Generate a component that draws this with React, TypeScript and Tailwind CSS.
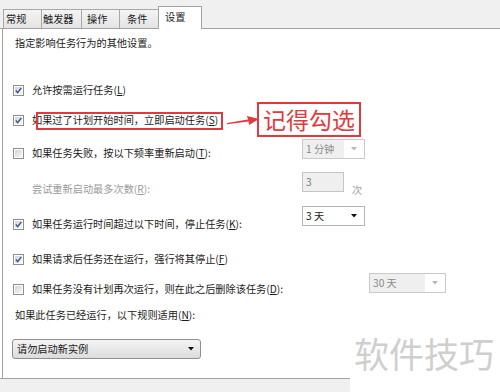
import React from 'react';

function CheckBox({ checked }: { checked?: boolean }) {
  return (
    <span className="flex h-[11px] w-[11px] shrink-0 border border-[#8e8f8f] bg-white p-px">
      <span className="flex h-full w-full items-center justify-center bg-linear-to-br from-[#cfd3d9] to-[#f7f7f7]">
        {checked && (
          <svg width="7" height="7" viewBox="0 0 7 7">
            <path d="M0.8 3.4 L2.7 5.6 L6.3 0.9" stroke="#40568c" strokeWidth="1.5" fill="none" />
          </svg>
        )}
      </span>
    </span>
  );
}

function Arrow({ color }: { color: string }) {
  return (
    <svg width="6" height="4" viewBox="0 0 6 4">
      <path d="M0 0 H6 L3 3.5 Z" fill={color} />
    </svg>
  );
}

function Select({ text, width, disabled }: { text: string; width: string; disabled?: boolean }) {
  return (
    <div className={`flex h-[20px] shrink-0 border ${width} ${disabled ? 'border-[#cacaca]' : 'border-[#b5b5b5]'} bg-white`}>
      <div
        className={`flex-1 pl-[3px] leading-[18px] ${disabled ? 'bg-[#efefef] text-[#8a8a8a]' : 'text-[#1a1a1a]'}`}
      >
        {text}
      </div>
      <div className="flex w-[20px] items-center justify-center">
        <Arrow color={disabled ? '#b8b8b8' : '#111111'} />
      </div>
    </div>
  );
}

function Label({ children, mt }: { children: React.ReactNode; mt?: string }) {
  return <span className={`h-[14px] leading-[14px] whitespace-nowrap ${mt ?? ''}`}>{children}</span>;
}

function Row({ checked, children, mt }: { checked?: boolean; children: React.ReactNode; mt?: string }) {
  return (
    <div className={`flex items-center gap-[8px] ${mt ?? ''}`}>
      <CheckBox checked={checked} />
      <Label>{children}</Label>
    </div>
  );
}

const tabs = [
  { name: '常规', w: 'w-[39px]', pl: 'pl-[2px]' },
  { name: '触发器', w: 'w-[41px]', pl: 'pl-[1px]' },
  { name: '操作', w: 'w-[39px]', pl: 'pl-[5px]' },
  { name: '条件', w: 'w-[40px]', pl: 'pl-[7px]' },
];

export default function App() {
  return (
    <div className="relative h-[392px] w-[500px] overflow-hidden bg-white text-[10.2px] text-[#1a1a1a] font-['Noto_Sans_CJK_SC','Liberation_Sans',sans-serif]">
      {/* tab strip */}
      <div className="flex h-[29px] items-end border-b border-[#a3a3a3] bg-[#f0f0f0] pl-[3px]">
        {tabs.map((t, i) => (
          <div
            key={t.name}
            className={`h-[19px] border border-b-0 border-[#a8a8a8] bg-linear-to-b from-[#f4f4f4] to-[#e4e4e4] pt-[2px] leading-[14px] ${t.w} ${t.pl} ${i > 0 ? '-ml-px' : ''}`}
          >
            {t.name}
          </div>
        ))}
        <div className="relative z-10 -mb-px -ml-px h-[23px] w-[44px] border border-b-0 border-[#a3a3a3] bg-white pl-[6px] pt-[3px] leading-[14px]">
          设置
        </div>
      </div>

      {/* panel */}
      <div className="ml-[2px] h-[349px] border-l border-[#a3a3a3] pl-[10px]">
        <div className="pl-[2px] pt-[7px] leading-[14px]">指定影响任务行为的其他设置。</div>

        <Row checked mt="mt-[33px]">
          允许按需运行任务(<u>L</u>)
        </Row>
        <Row checked mt="mt-[16px]">
          如果过了计划开始时间，立即启动任务(<u>S</u>)
        </Row>

        <div className="mt-[12px] flex items-start">
          <div className="mt-[7px] flex w-[289px] items-center gap-[8px]">
            <CheckBox />
            <Label>
              如果任务失败，按以下频率重新启动(<u>T</u>):
            </Label>
          </div>
          <Select text="1 分钟" width="w-[63px]" disabled />
        </div>

        <div className="mt-[12px] flex items-start">
          <div className="mt-[9px] w-[289px] pl-[19px]">
            <Label>
              <span className="text-[#9a9a9a]">
                尝试重新启动最多次数(<u>R</u>):
              </span>
            </Label>
          </div>
          <div className="h-[20px] w-[42px] border border-[#c4c4c4] bg-[#efefef] pl-[3px] leading-[17px] text-[#777]">3</div>
          <span className="ml-[8px] mt-[11px] leading-[14px] text-[#a0a0a0]">次</span>
        </div>

        <div className="mt-[9px] flex items-start">
          <div className="mt-[11px] flex w-[289px] items-center gap-[8px]">
            <CheckBox checked />
            <Label>
              如果任务运行时间超过以下时间，停止任务(<u>K</u>):
            </Label>
          </div>
          <Select text="3 天" width="w-[63px]" />
        </div>

        <Row checked mt="mt-[21px]">
          如果请求后任务还在运行，强行将其停止(<u>F</u>)
        </Row>

        <div className="mt-[7px] flex items-start">
          <div className="mt-[9px] flex w-[356px] items-center gap-[8px]">
            <CheckBox />
            <Label>
              如果任务没有计划再次运行，则在此之后删除该任务(<u>D</u>):
            </Label>
          </div>
          <Select text="30 天" width="w-[77px]" disabled />
        </div>

        <div className="mt-[12px] pl-[2px] leading-[14px]">
          如果此任务已经运行，以下规则适用(<u>N</u>):
        </div>

        <div className="-ml-px mt-[17px] flex h-[20px] w-[189px] items-center justify-between rounded-[3px] border border-[#8e8f8f] bg-linear-to-b from-[#f5f5f5] to-[#dcdcdc] pl-[4px] pr-[6px]">
          <span className="leading-[14px]">请勿启动新实例</span>
          <Arrow color="#111111" />
        </div>
      </div>

      {/* bottom strip */}
      <div className="flex h-[14px]">
        <div className="w-[350px] border-t border-[#a3a3a3] bg-[#f0f0f0]" />
      </div>

      {/* annotations */}
      <div className="pointer-events-none absolute left-[36px] top-[112px] h-[18px] w-[187px] border-2 border-[#e2393c]" />
      <svg className="absolute left-[226px] top-[114px]" width="34" height="14" viewBox="0 0 34 14">
        <path d="M1 9 L22 5.6 L21 2 L33 5 L23 11 L22.5 7.6 L1 10.2 Z" fill="#e2393c" />
      </svg>
      <div className="absolute left-[257px] top-[102px] flex h-[35px] w-[104px] items-center justify-center border-2 border-[#e2393c] text-[23px] leading-none text-[#e2393c]">
        记得勾选
      </div>

      <div className="absolute left-[354px] top-[331px] text-[35px] leading-[44px] text-[#cfcfcf]">软件技巧</div>
    </div>
  );
}
